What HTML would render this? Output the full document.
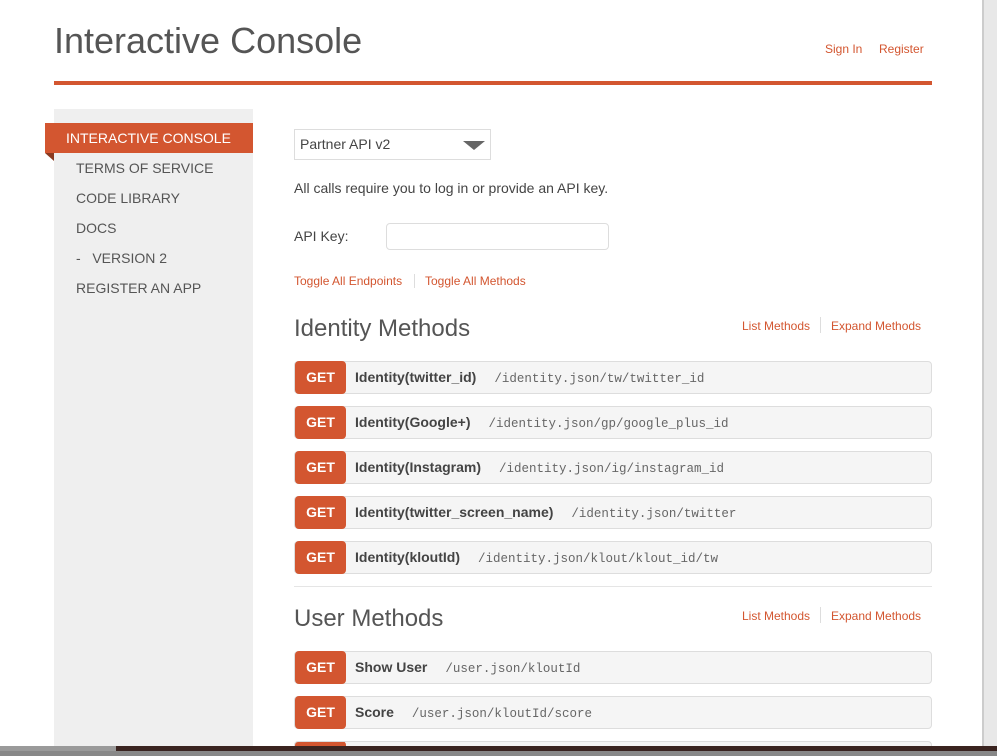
<!DOCTYPE html>
<html style="overflow:hidden;height:756px"><head><style>
*{margin:0;padding:0;box-sizing:border-box}
body{width:997px;height:756px;overflow:hidden;background:#fff;font-family:"Liberation Sans",sans-serif;position:relative;color:#555}
.a{position:absolute}
.nav{position:absolute;left:76px;font-size:14px;color:#555}
.row{position:absolute;left:294px;width:638px;height:33px;border:1px solid #ddd;border-radius:4px;background:#f5f5f5}
.get{position:absolute;left:0;top:-1px;width:51px;height:33px;background:#d35630;border-radius:4px;color:#fff;font-weight:bold;font-size:14px;text-align:center;line-height:33px}
.nm{position:absolute;left:60px;top:0;line-height:31px;font-size:14px;font-weight:bold;color:#444;white-space:nowrap}
.nm span{font-family:"Liberation Mono",monospace;font-weight:normal;font-size:12.5px;color:#666;margin-left:18px}
.h{position:absolute;left:294px;font-size:24px;color:#555}
.lk{position:absolute;font-size:12px;color:#d35630}
</style></head><body>
<div class="a" style="left:982px;top:0;width:15px;height:756px;background:#e8e8e8;border-left:2px solid #ccc"></div>
<div class="a" style="left:54px;top:20px;font-size:36px;color:#555">Interactive Console</div>
<div class="lk" style="left:825px;top:42px">Sign In</div>
<div class="lk" style="left:879px;top:42px">Register</div>
<div class="a" style="left:54px;top:81px;width:878px;height:4px;background:#d35630"></div>
<div class="a" style="left:54px;top:109px;width:199px;height:640px;background:#efefef"></div>
<div class="a" style="left:45px;top:123px;width:208px;height:30px;background:#d35630;color:#fff;font-size:14px;line-height:30px;padding-left:21px">INTERACTIVE CONSOLE</div>
<div class="a" style="left:45px;top:153px;width:0;height:0;border-top:8px solid #8a3a20;border-left:9px solid transparent"></div>
<div class="nav" style="top:160px">TERMS OF SERVICE</div>
<div class="nav" style="top:190px">CODE LIBRARY</div>
<div class="nav" style="top:220px">DOCS</div>
<div class="nav" style="top:250px">-&nbsp;&nbsp;&nbsp;VERSION 2</div>
<div class="nav" style="top:280px">REGISTER AN APP</div>
<div class="a" style="left:294px;top:129px;width:197px;height:31px;border:1px solid #ddd;font-size:14px;line-height:29px;padding-left:5px;color:#444">Partner API v2
<div class="a" style="right:5px;top:11px;border-top:9px solid #666;border-left:11px solid transparent;border-right:11px solid transparent"></div></div>
<div class="a" style="left:294px;top:180px;font-size:14px;color:#444">All calls require you to log in or provide an API key.</div>
<div class="a" style="left:294px;top:228px;font-size:14px;color:#444">API Key:</div>
<div class="a" style="left:386px;top:223px;width:223px;height:27px;border:1px solid #ddd;border-radius:4px"></div>
<div class="lk" style="left:294px;top:274px">Toggle All Endpoints</div>
<div class="a" style="left:414px;top:274px;width:1px;height:14px;background:#ddd"></div>
<div class="lk" style="left:425px;top:274px">Toggle All Methods</div>
<div class="h" style="top:315px">Identity Methods</div>
<div class="lk" style="left:742px;top:319px">List Methods</div>
<div class="a" style="left:820px;top:317px;width:1px;height:16px;background:#ddd"></div>
<div class="lk" style="left:831px;top:319px">Expand Methods</div>
<div class="row" style="top:361px"><div class="get">GET</div><div class="nm">Identity(twitter_id)<span>/identity.json/tw/twitter_id</span></div></div>
<div class="row" style="top:406px"><div class="get">GET</div><div class="nm">Identity(Google+)<span>/identity.json/gp/google_plus_id</span></div></div>
<div class="row" style="top:451px"><div class="get">GET</div><div class="nm">Identity(Instagram)<span>/identity.json/ig/instagram_id</span></div></div>
<div class="row" style="top:496px"><div class="get">GET</div><div class="nm">Identity(twitter_screen_name)<span>/identity.json/twitter</span></div></div>
<div class="row" style="top:541px"><div class="get">GET</div><div class="nm">Identity(kloutId)<span>/identity.json/klout/klout_id/tw</span></div></div>
<div class="a" style="left:294px;top:586px;width:638px;height:1px;background:#e5e5e5"></div>
<div class="h" style="top:605px">User Methods</div>
<div class="lk" style="left:742px;top:609px">List Methods</div>
<div class="a" style="left:820px;top:607px;width:1px;height:16px;background:#ddd"></div>
<div class="lk" style="left:831px;top:609px">Expand Methods</div>
<div class="row" style="top:651px"><div class="get">GET</div><div class="nm">Show User<span>/user.json/kloutId</span></div></div>
<div class="row" style="top:696px"><div class="get">GET</div><div class="nm">Score<span>/user.json/kloutId/score</span></div></div>
<div class="row" style="top:741px;height:15px;overflow:hidden"><div class="get"></div></div>
<div class="a" style="left:0;top:746px;width:997px;height:10px;background:#888"></div>
<div class="a" style="left:0;top:746px;width:116px;height:5px;background:#9a9a9a"></div>
<div class="a" style="left:116px;top:746px;width:881px;height:5px;background:#3a2420"></div>
</body></html>
